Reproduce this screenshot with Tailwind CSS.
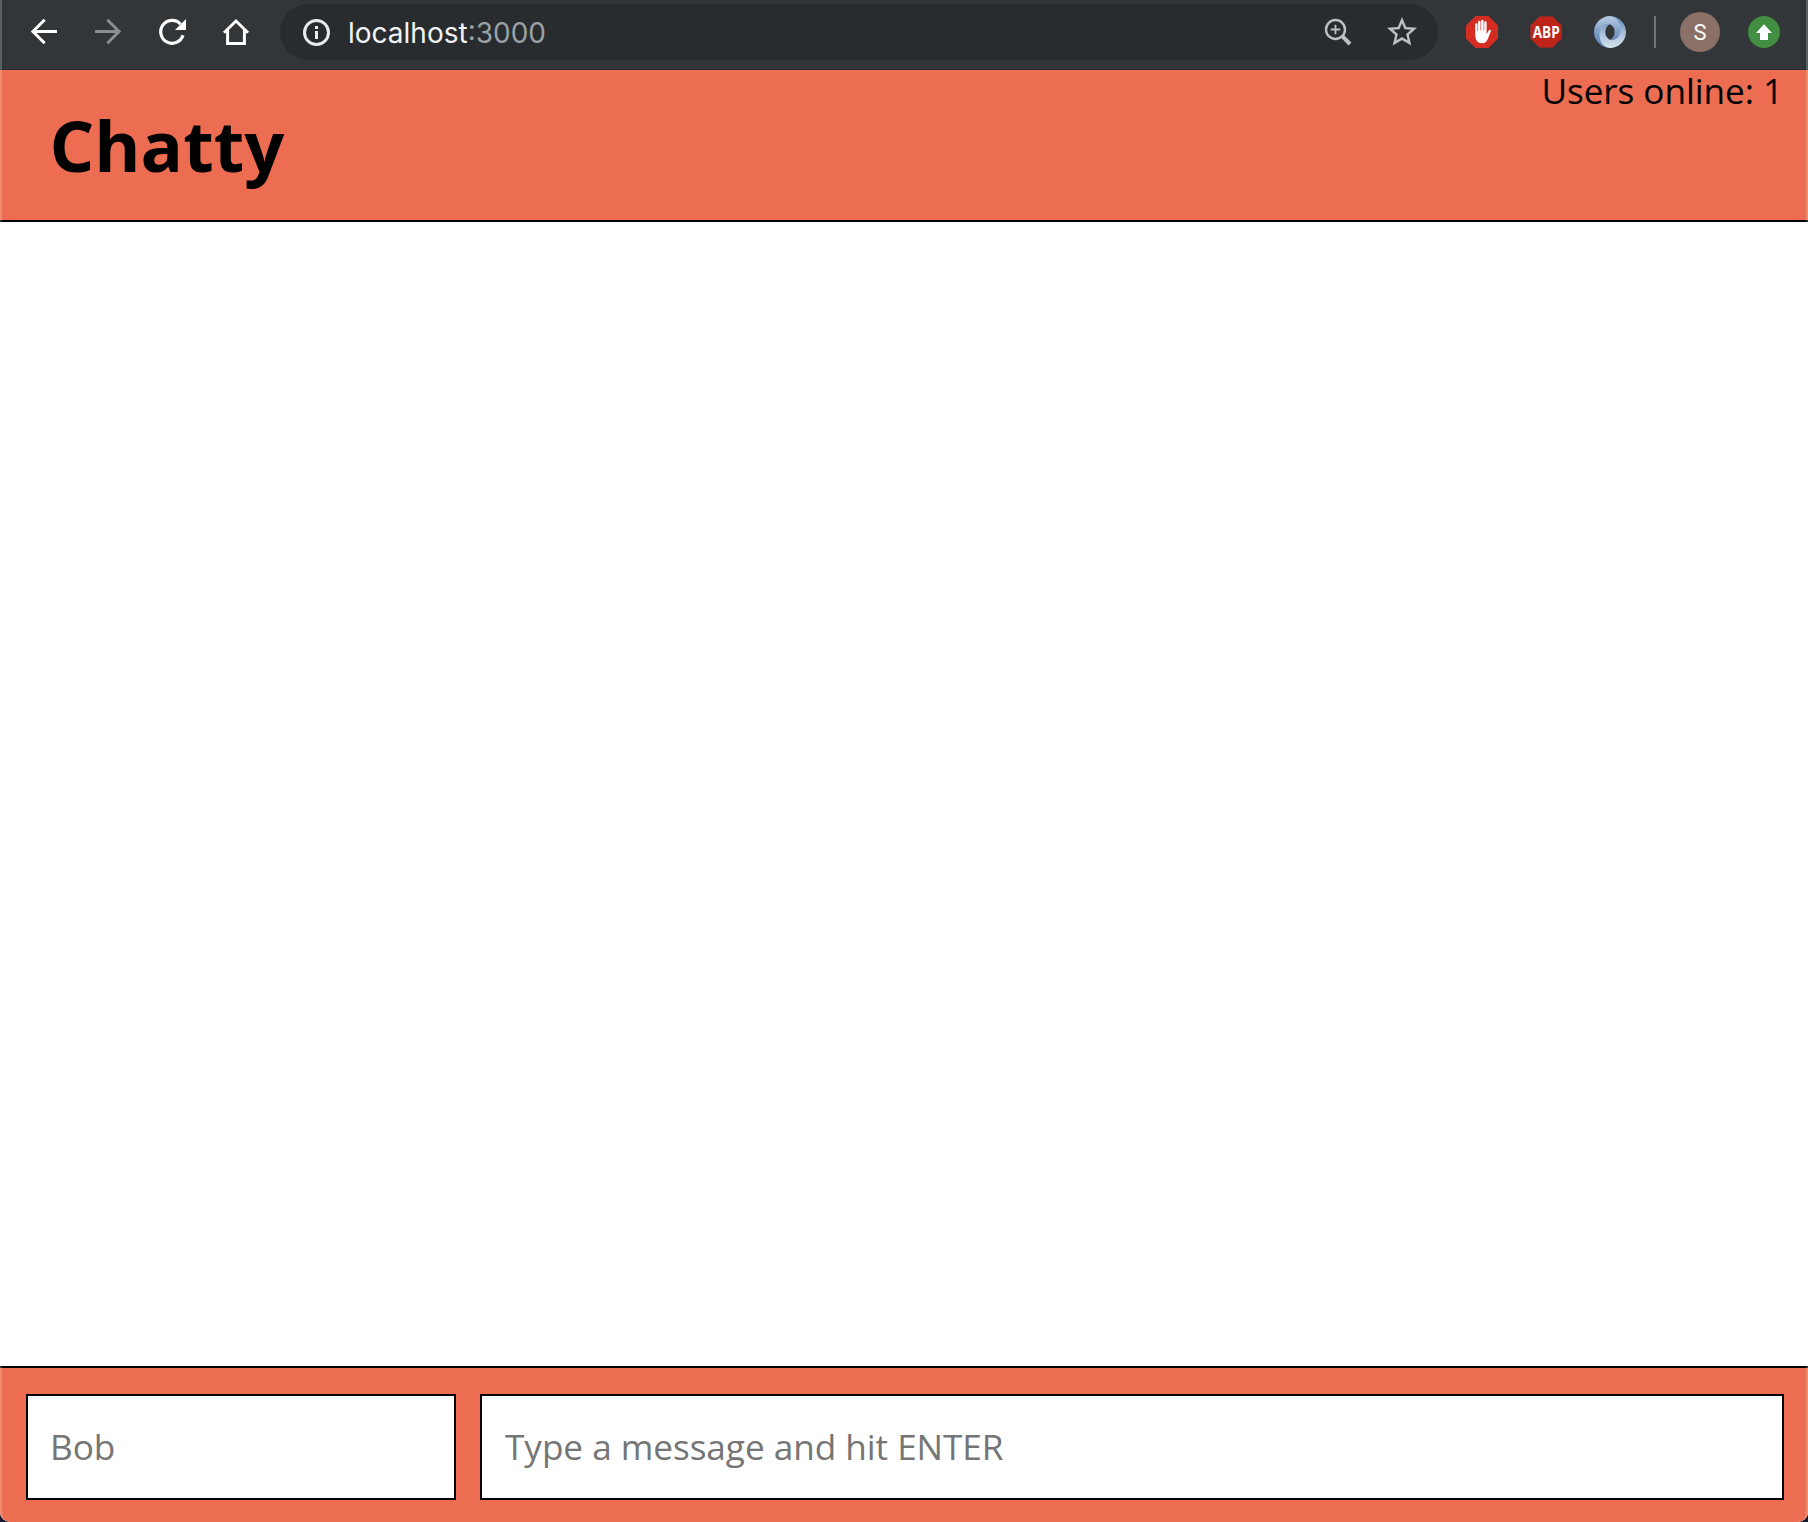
<!DOCTYPE html>
<html lang="en">
<head>
<meta charset="utf-8">
<title>Chatty</title>
<script src="https://cdn.jsdelivr.net/npm/@tailwindcss/browser@4"></script>
</head>
<body class="bg-[#14182a]">
<div class="relative flex flex-col w-[1808px] h-[1522px] overflow-hidden rounded-b-[10px] bg-white font-['Open_Sans',sans-serif] text-[35.2px] text-black">

  <!-- Browser toolbar -->
  <div class="flex h-[70px] shrink-0 items-start border-b border-[#27292c] bg-[#323639] pt-1 pl-6">
    <div class="flex h-14 w-[256px] items-center gap-6">
      <svg class="size-10 shrink-0" viewBox="0 0 40 40" fill="none" stroke="#fff" stroke-width="3"><path d="M33 19.500H9M20.700 7.700 8.900 19.500l11.800 11.800"/></svg>
      <svg class="size-10 shrink-0" viewBox="0 0 40 40" fill="none" stroke="#8b8d8f" stroke-width="3"><path d="M7 19.500H31M19.300 7.700 31.100 19.500 19.300 31.300"/></svg>
      <svg class="size-10 shrink-0" viewBox="0 0 40 40"><path d="M28.6 12.2A11.4 11.4 0 1 0 31 23.3" fill="none" stroke="#fff" stroke-width="3.2"/><path d="M34 7v11H23z" fill="#fff"/></svg>
      <svg class="size-10 shrink-0" viewBox="0 0 40 40" fill="none" stroke="#fff" stroke-width="3"><path d="M8 20.8 20 9l12 11.8M11.6 18v13.4h16.8V18"/></svg>
    </div>
    <div class="flex h-14 w-[1158px] items-center rounded-full bg-[#282c2f] pl-[22px] pr-[18px] font-[Inter,sans-serif] text-[28px]">
      <svg class="mr-[17px] size-[29px] shrink-0" viewBox="0 0 29 29"><circle cx="14.5" cy="14.5" r="12" fill="none" stroke="#e8eaed" stroke-width="3"/><path d="M13 13h3v8h-3zM13 8h3v3h-3z" fill="#e8eaed"/></svg>
      <span class="pt-px text-[#f1f3f4]">localhost</span><span class="pt-px text-[#9aa0a6]">:3000</span>
      <svg class="ml-auto size-8 shrink-0" viewBox="0 0 32 32" fill="none" stroke="#bdc1c6"><circle cx="13.5" cy="13.5" r="9.5" stroke-width="2.4"/><path d="M8.7 13.5h9.6M13.5 8.7v9.6" stroke-width="1.8"/><path d="m20.2 20.2 7.8 7.8" stroke-width="4"/></svg>
      <svg class="ml-[30px] size-[36px] shrink-0" viewBox="0 0 24 24" fill="#bdc1c6"><path d="m22 9.24-7.19-.62L12 2 9.19 8.63 2 9.24l5.46 4.73L5.82 21 12 17.27 18.18 21l-1.63-7.03L22 9.24zM12 15.4l-3.76 2.27 1-4.28-3.32-2.88 4.38-.38L12 6.1l1.71 4.04 4.38.38-3.32 2.88 1 4.28L12 15.4z"/></svg>
    </div>
    <div class="ml-7 flex h-14 items-center">
      <svg class="size-8" viewBox="0 0 32 32"><path d="M9.5 0h13L32 9.5v13L22.500 32h-13L0 22.500v-13z" fill="#d32d22"/><path d="M9.200 18.500V8.500a1.150 1.150 0 0 1 2.300 0V15h.6V6a1.200 1.200 0 0 1 2.400 0v8.500h.6V5a1.250 1.250 0 0 1 2.500 0v9.500h.6V6.500a1.200 1.200 0 0 1 2.400 0V18.200l2.200-3.700c.8-1.100 2.600-.7 2.100.8l-3.100 7.700c-1.100 2.800-3 4.200-5.900 4.200-4.300 0-6.700-2.900-6.700-8.700z" fill="#fff"/></svg>
      <svg class="ml-8 size-8 overflow-visible" viewBox="0 0 32 32"><path d="M9.500.5h13l9 9v13l-9 9h-13l-9-9v-13z" fill="#be2519" stroke="#8d302a" stroke-width=".7"/><text x="16.200" y="21.800" text-anchor="middle" textLength="27" lengthAdjust="spacingAndGlyphs" font-family="Open Sans" font-size="16" font-weight="700" fill="#fff">ABP</text></svg>
      <svg class="ml-8 size-8" viewBox="0 0 160 160">
        <defs>
          <linearGradient id="ringBack" x1="0" y1="0" x2="0" y2="1"><stop offset="0" stop-color="#b9cde2"/><stop offset=".5" stop-color="#7d9cc5"/><stop offset="1" stop-color="#5c7fb0"/></linearGradient>
          <linearGradient id="ringFront" x1="0" y1="0" x2="0" y2="1"><stop offset="0" stop-color="#6384b4"/><stop offset=".5" stop-color="#a3bbd8"/><stop offset="1" stop-color="#d8e4ef"/></linearGradient>
        </defs>
        <path fill="url(#ringBack)" d="M79.865 119.100c35.398 48.255 70.040-13.469 69.989-50.587C149.794 24.627 105.312.1 79.836.1 38.944.1 0 33.895 0 80.135 0 131.531 44.640 160 79.836 160c-7.965-1.147-34.506-6.834-34.863-67.967-.24-41.347 13.488-57.866 34.805-50.599.477.177 23.514 9.265 23.514 38.951 0 29.560-23.427 38.715-23.427 38.715z"/>
        <path fill="url(#ringFront)" d="M79.823 41.401C56.433 33.339 27.780 52.618 27.780 91.230c0 63.048 46.721 68.770 52.384 68.770C121.056 160 160 126.204 160 79.964 160 28.568 115.360.1 80.164.1c9.748-1.350 52.541 10.550 52.541 69.037 0 38.141-31.953 58.905-52.735 50.033-.477-.178-23.514-9.265-23.514-38.951 0-29.560 23.367-38.818 23.367-38.818z"/>
      </svg>
      <div class="ml-7 h-8 w-0.5 bg-[#707477]"></div>
      <div class="ml-6 flex size-10 items-center justify-center rounded-full bg-[#8a7066] font-[Roboto,sans-serif] text-[22px] text-white">S</div>
      <svg class="ml-7 size-8" viewBox="0 0 32 32"><circle cx="16" cy="16" r="16" fill="#428e43"/><path d="m16 8.300 8 8.700h-4v7h-8v-7H8z" fill="#fff"/></svg>
    </div>
  </div>

  <!-- App header -->
  <header class="flex h-[152px] shrink-0 items-start justify-between border-b-2 border-black bg-[#ec6d51] pr-[25px] pl-[49.5px]">
    <h1 class="pt-[27px] text-[70.4px] leading-[96px] font-bold">Chatty</h1>
    <p class="leading-[40px] tracking-[-0.08px]">Users online: 1</p>
  </header>

  <main class="flex-1 bg-white"></main>

  <!-- Message bar -->
  <footer class="flex h-[156px] shrink-0 gap-6 border-t-2 border-black bg-[#ec6d51] px-[26px] pt-[26px] pr-6">
    <input class="h-[106px] w-[430px] border-2 border-black bg-white px-[22px] pb-0.5 tracking-[-0.08px] placeholder:text-[#757575]" placeholder="Bob">
    <input class="h-[106px] min-w-0 flex-1 border-2 border-black bg-white px-[23px] pb-0.5 tracking-[-0.06px] placeholder:text-[#757575]" placeholder="Type a message and hit ENTER">
  </footer>

  <!-- Window edge highlight -->
  <div class="pointer-events-none absolute inset-0 rounded-b-[10px] border-x-2 border-white/20"></div>
</div>
</body>
</html>
